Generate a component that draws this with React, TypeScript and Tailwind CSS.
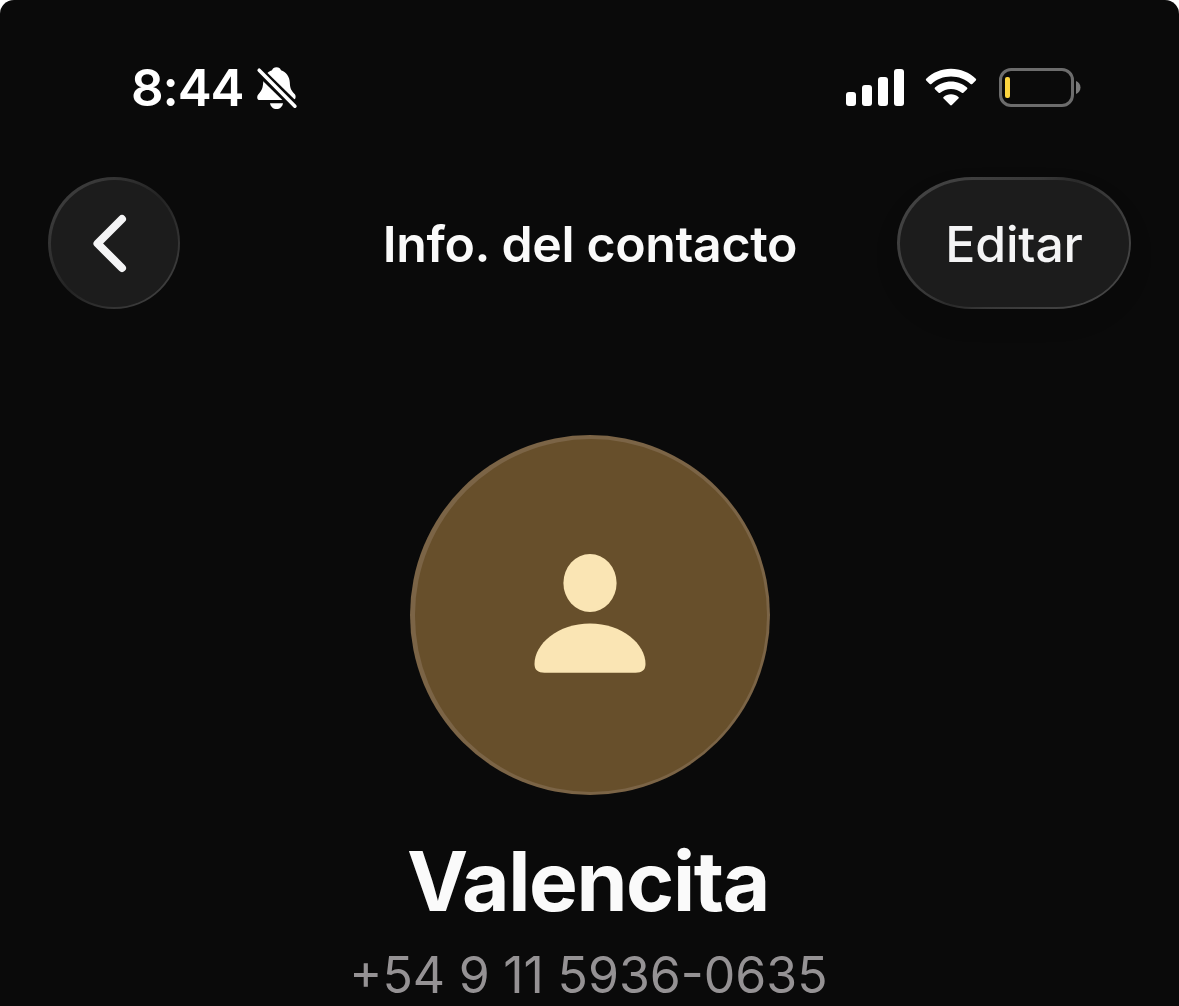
import React from "react";

const BellOffIcon: React.FC = () => (
  <svg width="42" height="44" viewBox="0 0 42 44" fill="none">
    <path
      d="M20.5 1.2C22.8 1.2 24.4 2.4 25 4.2C30 6 33.6 10.4 33.8 16.5C34 22.5 35.2 24.4 38.6 28C40.4 30 39.8 34 37 34H3.6C.8 34 .6 30.2 2.4 28.2C5.6 24.6 6.8 22.5 7.2 16.5C7.5 10.4 11 6 16 4.2C16.6 2.4 18.2 1.2 20.5 1.2Z"
      fill="white"
    />
    <path d="M14 37.2H27C26.4 40.7 23.8 43 20.5 43C17.2 43 14.6 40.7 14 37.2Z" fill="white" />
    <path d="M2.5 4.5L42.5 43.5" stroke="#0a0a0a" strokeWidth="9" />
    <path d="M3.2 4.2L38.9 40.2" stroke="white" strokeWidth="3.6" strokeLinecap="round" />
  </svg>
);

const SignalIcon: React.FC = () => (
  <div className="flex h-[38px] items-end gap-1.5">
    <div className="h-3.5 w-2.5 rounded-[3px] bg-white" />
    <div className="h-[21px] w-2.5 rounded-[3px] bg-white" />
    <div className="h-[29px] w-2.5 rounded-[3px] bg-white" />
    <div className="h-[37px] w-2.5 rounded-[3px] bg-white" />
  </div>
);

const WifiIcon: React.FC = () => (
  <svg width="52" height="38" viewBox="0 0 52 38" fill="white">
    <path d="M26 0.8C35.6 .8 44.4 4.6 50.8 10.7C51.3 11.2 51.3 11.9 50.8 12.4L47.3 15.9C46.8 16.4 46.1 16.4 45.6 15.9C40.4 11.1 33.6 8.4 26 8.4C18.4 8.4 11.6 11.1 6.4 15.9C5.9 16.4 5.2 16.4 4.7 15.9L1.2 12.4C.7 11.9 .7 11.2 1.2 10.7C7.6 4.6 16.4 .8 26 .8Z" />
    <path d="M26 13.4C32.2 13.4 37.8 15.7 42 19.5C42.5 20 42.5 20.7 42 21.2L38.4 24.7C37.9 25.2 37.3 25.2 36.8 24.8C33.9 22.3 30.1 20.9 26 20.9C21.9 20.9 18.1 22.3 15.2 24.8C14.7 25.2 14.1 25.2 13.6 24.7L10 21.2C9.5 20.7 9.5 20 10 19.5C14.2 15.7 19.8 13.4 26 13.4Z" />
    <path d="M26 26.2C28.8 26.2 31.4 27.2 33.4 28.9C33.9 29.3 33.9 30 33.4 30.5L26.9 37.1C26.4 37.6 25.6 37.6 25.1 37.1L18.6 30.5C18.1 30 18.1 29.3 18.6 28.9C20.6 27.2 23.2 26.2 26 26.2Z" />
  </svg>
);

const BatteryIcon: React.FC = () => (
  <div className="flex items-center gap-[2px]">
    <div className="flex h-[39px] w-[75px] items-center rounded-[12px] border-3 border-[#6c6c6c] pl-[3px]">
      <div className="h-[21px] w-[5px] rounded-[2px] bg-[#fcd53f]" />
    </div>
    <svg width="5" height="13" viewBox="0 0 5 13">
      <path d="M0 0C2.6 1 4.5 3.5 4.5 6.5S2.6 12 0 13Z" fill="#7b7b7b" />
    </svg>
  </div>
);

const StatusBar: React.FC = () => (
  <div className="flex h-[177px] items-start justify-between pl-[131px] pr-[98px]">
    <div className="flex pt-[58px]">
      <span className="w-[124.5px] whitespace-nowrap text-[51px] font-semibold leading-[60px] tracking-[-1.1px]">
        8:44
      </span>
      <div className="pt-[8px]">
        <BellOffIcon />
      </div>
    </div>
    <div className="flex pt-[68px]">
      <SignalIcon />
      <div className="ml-[21px] mr-[22px]">
        <WifiIcon />
      </div>
      <BatteryIcon />
    </div>
  </div>
);

const Header: React.FC = () => (
  <header className="grid h-[132px] grid-cols-[234px_1fr_234px] items-center px-12">
    <button
      aria-label="Volver"
      className="size-[132px] rounded-full bg-[linear-gradient(135deg,#464646,#383838_20%,#232323_50%,#343434_75%,#4a4a4a)] p-[2.5px]"
    >
      <div className="flex size-full items-center justify-center rounded-full bg-[#1c1c1c]">
        <svg width="40" height="62" viewBox="0 0 40 62" fill="none" className="mr-[11px]">
          <path
            d="M33 7L8.500 31.500L33 56"
            stroke="#f4f4f5"
            strokeWidth="8"
            strokeLinecap="round"
            strokeLinejoin="round"
          />
        </svg>
      </div>
    </button>
    <h1 className="whitespace-nowrap pt-px pl-px text-center text-[50px] font-semibold leading-[60px] tracking-[-0.35px] text-[#fafafa]">
      Info. del contacto
    </h1>
    <button className="h-[132px] w-[234px] rounded-[75px/66px] bg-[linear-gradient(135deg,#464646,#383838_40%,#2a2a2a_50%,#383838_60%,#4a4a4a)] p-[2.5px] shadow-[0_12px_24px_rgba(0,0,0,0.12)]">
      <div className="flex size-full items-center justify-center rounded-[73px/64px] bg-[#1c1c1c] pt-0.5 text-[50px] font-medium tracking-[-0.2px] text-[#f4f4f5]">
        Editar
      </div>
    </button>
  </header>
);

const Avatar: React.FC = () => (
  <div className="size-[360px] rounded-full bg-[#7b6446] py-[3.5px] pl-[5px] pr-[2.5px]">
    <div className="flex size-full items-center justify-center rounded-full bg-[#674f2b] pr-0.5">
      <svg width="112" height="120" viewBox="0 0 112 120" fill="#fae5b4" className="-mt-0.5">
        <ellipse cx="56" cy="29" rx="26.6" ry="29" />
        <path d="M56 69.6C88 69.6 111.5 90 111.5 110C111.5 116 108 118.7 101.5 118.7H10.5C4 118.7 .5 116 .5 110C.5 90 24 69.6 56 69.6Z" />
      </svg>
    </div>
  </div>
);

const App: React.FC = () => {
  return (
    <div className="h-[1006px] w-[1179px] overflow-hidden bg-white">
      <div className="flex h-full flex-col rounded-t-[14px] bg-[#0a0a0a] font-['Inter',sans-serif] text-white">
        <StatusBar />
        <Header />
        <main className="flex flex-col items-center pt-[126px]">
          <Avatar />
          <h2 className="mt-[38px] whitespace-nowrap pr-[3px] text-[82px] font-bold leading-[98px] tracking-[-1.4px] text-[#fafafa]">
            Valencita
          </h2>
          <p className="mt-[14px] whitespace-nowrap pr-[2px] text-[50px] leading-[60px] text-[#959294] [word-spacing:-0.5px]">
            +54 9 11 5936-0635
          </p>
        </main>
      </div>
    </div>
  );
};

export default App;
